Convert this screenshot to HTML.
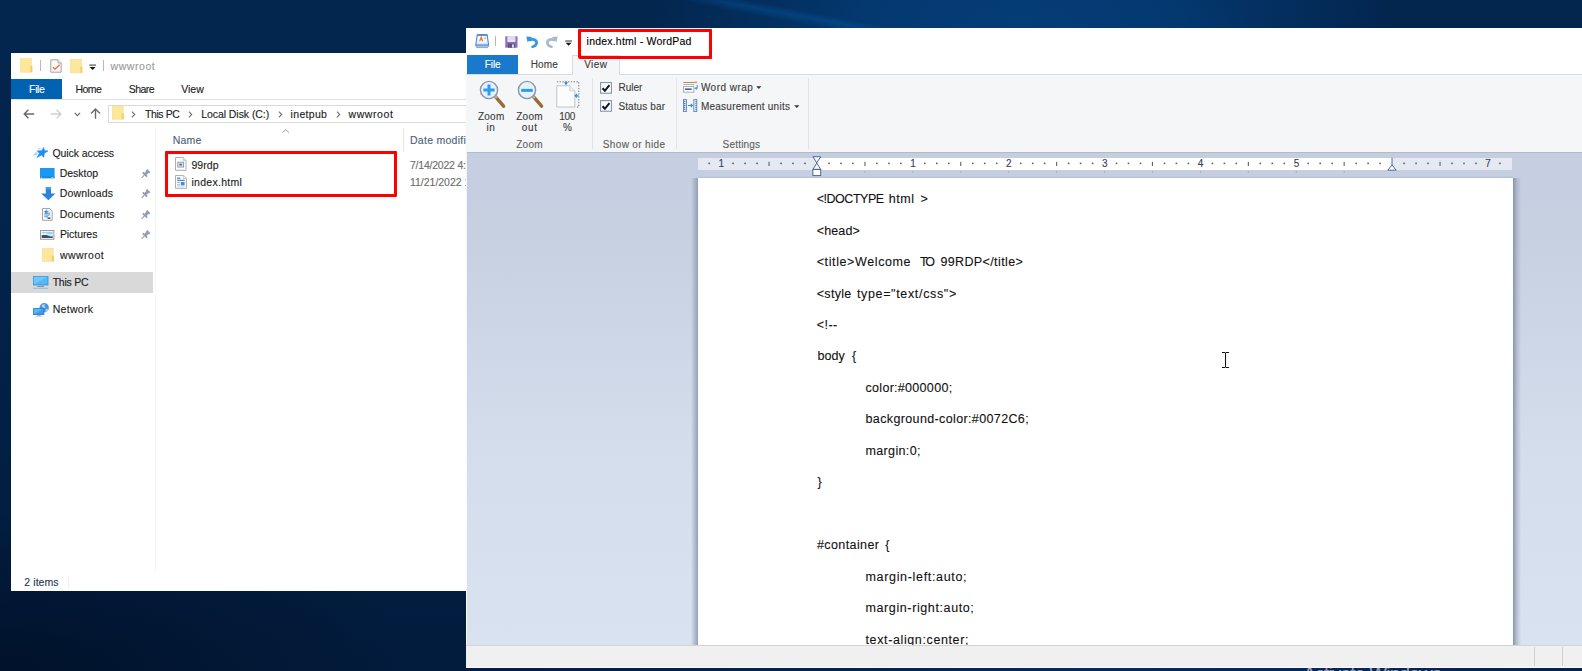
<!DOCTYPE html>
<html><head><meta charset="utf-8"><title>index.html - WordPad</title>
<style>
*{box-sizing:border-box;margin:0;padding:0}
html,body{width:1582px;height:671px;overflow:hidden}
body{position:relative;font-family:"Liberation Sans",sans-serif;font-size:11.5px;color:#1b1b1b;background:#02224a}
.a{position:absolute}
.ln{position:absolute;left:0;top:0;width:0;height:0}
.t{display:block;position:absolute;white-space:pre;-webkit-text-stroke:.12px currentColor}
svg{position:absolute;overflow:visible}
#desk{overflow:hidden;position:absolute;left:0;top:0;width:1582px;height:671px;
 background:
  radial-gradient(ellipse 370px 130px at 1020px 22px, rgba(4,62,121,.95), rgba(4,62,121,.8) 40%, rgba(4,62,121,.35) 72%, rgba(4,62,121,0) 100%),
  radial-gradient(ellipse 420px 160px at 0px 671px, rgba(0,10,28,.55), rgba(0,10,28,.25) 60%, rgba(0,10,28,0) 100%),
  linear-gradient(180deg,#03264f 0%,#02234a 40%,#021d40 85%,#021c3d 100%);}
#exw{position:absolute;left:0;top:0;width:466px;height:671px;overflow:hidden}
#exbg{position:absolute;left:11.3px;top:53px;width:460px;height:538.2px;background:#fff}
#wpw{position:absolute;left:0;top:0;width:1582px;height:671px;overflow:hidden}
#wpbg{position:absolute;left:466px;top:28px;width:1116px;height:639px;background:#fff}
.red{position:absolute;border:3px solid #fe0000;border-radius:1px}
.vsep{position:absolute;width:1px;background:#e2e3e5}

</style></head><body>
<div id="desk"><div class="a" style="left:640px;top:8px;width:300px;height:14px;transform:rotate(10.5deg);background:linear-gradient(180deg,rgba(8,86,160,0),rgba(8,86,160,.42) 45%,rgba(8,86,160,0));-webkit-mask-image:linear-gradient(90deg,transparent,#000 30%,#000 70%,transparent);mask-image:linear-gradient(90deg,transparent,#000 30%,#000 70%,transparent)"></div></div>
<div class="a" style="left:466px;top:667px;width:1116px;height:4px;background:linear-gradient(90deg,#021d43 0%,#03234f 35%,#05295c 55%,#04265a 80%,#03214b 100%)"></div>

<!-- ================= Explorer ================= -->
<div id="exw">
 <div id="exbg"></div>
 <!-- title bar icons -->
 <svg style="left:20px;top:58px" width="13" height="15" viewBox="0 0 13 15"><rect x=".4" y=".6" width="11.2" height="13.6" fill="#fde79c" stroke="#f9dd86" stroke-width=".6"/><rect x="10.2" y="8" width="2.3" height="6.2" fill="#f4d06c"/></svg>
 <div class="a" style="left:40px;top:60px;width:1px;height:11px;background:#b9b9b9"></div>
 <svg style="left:50px;top:59px" width="12" height="14" viewBox="0 0 12 14"><path d="M.8.8H8L11.2 4V13.2H.8Z" fill="#f9f9f9" stroke="#a3a3a3" stroke-width="1"/><path d="M8 .8V4H11.2" fill="#e6e6e6" stroke="#a3a3a3" stroke-width=".8"/><path d="M3 8.2L5 10.2L9.6 5.8" fill="none" stroke="#f26b2c" stroke-width="1.3"/></svg>
 <svg style="left:70px;top:59px" width="13" height="15" viewBox="0 0 13 15"><rect x=".4" y=".4" width="11.2" height="13.4" fill="#fde79c" stroke="#f9dd86" stroke-width=".6"/><rect x="10.2" y="7.6" width="2.3" height="6.2" fill="#f4d06c"/></svg>
 <svg style="left:89px;top:64px" width="8" height="7" viewBox="0 0 8 7"><rect x=".2" y=".5" width="6.8" height="1.2" fill="#555"/><path d="M.7 3H6.5L3.6 6Z" fill="#111"/></svg>
 <div class="a" style="left:103px;top:60px;width:1px;height:11px;background:#b9b9b9"></div>
 <!-- tabs -->
 <div class="a" style="left:11.3px;top:79px;width:50.7px;height:20px;background:#0063b1"></div>
 <div class="a" style="left:11px;top:99px;width:460px;height:1px;background:#dfe0e1"></div>
 <!-- nav arrows -->
 <svg style="left:23px;top:109px" width="12" height="10" viewBox="0 0 12 10"><path d="M11.2 5H1.2M5.4 .8L1.2 5L5.4 9.2" fill="none" stroke="#6a6a6a" stroke-width="1.4"/></svg>
 <svg style="left:50px;top:109px" width="12" height="10" viewBox="0 0 12 10"><path d="M.8 5H10.8M6.6 .8L10.8 5L6.6 9.2" fill="none" stroke="#cfcfcf" stroke-width="1.4"/></svg>
 <svg style="left:74px;top:112px" width="7" height="5" viewBox="0 0 7 5"><path d="M.7 .9L3.4 3.6L6.1 .9" fill="none" stroke="#6a6a6a" stroke-width="1.2"/></svg>
 <svg style="left:90px;top:108px" width="11" height="11" viewBox="0 0 11 11"><path d="M5.5 10.8V1.2M1 5.6L5.5 1.1L10 5.6" fill="none" stroke="#6a6a6a" stroke-width="1.4"/></svg>
 <!-- address box -->
 <div class="a" style="left:108px;top:105px;width:380px;height:18px;border:1px solid #d9d9d9;background:#fff"></div>
 <svg style="left:112px;top:106px" width="13" height="14" viewBox="0 0 13 14"><rect x=".4" y=".4" width="10.8" height="12.8" fill="#fde79c" stroke="#f9dd86" stroke-width=".6"/><rect x="9.6" y="7.4" width="2.3" height="5.8" fill="#f4d06c"/></svg>
 <svg style="left:131px;top:111px" width="5" height="7" viewBox="0 0 5 7"><path d="M.9 .7L3.7 3.5L.9 6.3" fill="none" stroke="#707070" stroke-width="1.1"/></svg>
 <svg style="left:188px;top:111px" width="5" height="7" viewBox="0 0 5 7"><path d="M.9 .7L3.7 3.5L.9 6.3" fill="none" stroke="#707070" stroke-width="1.1"/></svg>
 <svg style="left:277.5px;top:111px" width="5" height="7" viewBox="0 0 5 7"><path d="M.9 .7L3.7 3.5L.9 6.3" fill="none" stroke="#707070" stroke-width="1.1"/></svg>
 <svg style="left:335.5px;top:111px" width="5" height="7" viewBox="0 0 5 7"><path d="M.9 .7L3.7 3.5L.9 6.3" fill="none" stroke="#707070" stroke-width="1.1"/></svg>
 <!-- nav pane -->
 <div class="a" style="left:155px;top:128px;width:1px;height:444px;background:#f5f5f5"></div>
 <div class="a" style="left:11.3px;top:272px;width:141.7px;height:20.6px;background:#d9d9d9"></div>
 <!-- star -->
 <svg style="left:33px;top:147px" width="15" height="11" viewBox="0 0 15 11"><path d="M10.6 .5L11.6 3.7L14.9 4L11.3 6.3L10.8 10.2L8.3 7.9L4.1 10.4L6.5 6.3L4.3 3.9L8.8 3.7Z" fill="#1f8fee" stroke="#1f8fee" stroke-width=".7" stroke-linejoin="round"/><path d="M.4 8.2L4.4 7M1.8 6.4L4.6 5.8" stroke="#8cc6f7" stroke-width="1" fill="none"/><path d="M5 1.6L8.4 1.2" stroke="#a8d4f9" stroke-width=".9" fill="none"/></svg>
 <!-- desktop -->
 <svg style="left:40.4px;top:168.4px" width="15" height="11" viewBox="0 0 15 11"><rect x="0" y="0" width="14.6" height="10.2" fill="#1e96f3"/><rect x="0" y="8.6" width="14.6" height="1.6" fill="#1b82d6"/><rect x="11.2" y="8.9" width="2.6" height=".9" fill="#8ccaf9"/><rect x=".8" y="8.9" width="1.2" height=".9" fill="#8ccaf9"/></svg>
 <!-- downloads -->
 <svg style="left:40.6px;top:187.4px" width="15" height="14" viewBox="0 0 15 14"><path d="M4.8 0H10V6.4H14.4L7.4 13.2L.2 6.4H4.8Z" fill="#2b82da"/><rect x="4.8" y="0" width="5.2" height="2.4" fill="#4a9ce8"/></svg>
 <!-- documents -->
 <svg style="left:42.4px;top:207.6px" width="11" height="13" viewBox="0 0 11 13"><path d="M.5 .5H7.6L10.2 3.1V12.3H.5Z" fill="#fbfbfb" stroke="#9b9b9b" stroke-width=".9"/><path d="M2.4 3.4H6.4M2.4 5.2H8.2M2.4 7H8.2M2.4 8.8H6" stroke="#3d8fdc" stroke-width="1"/><path d="M5.6 9.4H8.4V11H5.6Z" fill="#555"/><path d="M4.6 1.6L3.2 4.8H5.6" fill="none" stroke="#2f7ed2" stroke-width=".9"/></svg>
 <!-- pictures -->
 <svg style="left:40.3px;top:229.7px" width="15" height="10" viewBox="0 0 15 10"><rect x=".5" y=".5" width="13.4" height="8.8" fill="#fff" stroke="#9c9c9c" stroke-width="1"/><rect x="1.7" y="1.7" width="11" height="6.4" fill="#9fd0f5"/><path d="M1.7 5.2C4 3.6 6 4.2 8 5.4C10 6.6 11.4 6.6 12.7 6.2V8.1H1.7Z" fill="#3c4f66"/><path d="M1.7 3.6C4 2.8 7 3.4 9 4.4L12.7 4V5.4C10 6 7 4.6 1.7 5.2Z" fill="#e9f3fb"/></svg>
 <!-- wwwroot folder -->
 <svg style="left:42px;top:248.2px" width="13" height="14" viewBox="0 0 13 14"><rect x=".3" y=".3" width="10.9" height="13.2" fill="#fde79c" stroke="#f9dd86" stroke-width=".6"/><rect x="9.8" y="7.6" width="2.3" height="5.9" fill="#f4d06c"/></svg>
 <!-- this pc -->
 <svg style="left:33px;top:276.4px" width="16" height="13" viewBox="0 0 16 13"><rect x=".4" y=".4" width="14.6" height="8.6" fill="#55b8f6" stroke="#2c8fe0" stroke-width=".8"/><path d="M.8 8.6V.8H14.6Z" fill="#7fcdfa" opacity=".7"/><rect x="4.4" y="9.9" width="6.6" height=".8" fill="#6b7684"/><rect x=".2" y="11.8" width="15" height=".8" fill="#7eaedd"/></svg>
 <!-- network -->
 <svg style="left:33px;top:303px" width="16" height="14" viewBox="0 0 16 14"><circle cx="11.2" cy="4.8" r="4.7" fill="#4a94dc"/><path d="M8.4 2.2C9.6 1.2 11 1 12 1.2C11 2.6 11.6 3.6 12.8 4.2C12 5.4 10.6 5.2 9.6 4.6Z" fill="#a9d3f5"/><path d="M12.6 6.2C13.6 5.8 14.6 6 15.2 6.4C14.6 7.8 13.8 8.6 12.6 9Z" fill="#a9d3f5"/><rect x=".4" y="5.6" width="10.4" height="6" fill="#3a9cf0" stroke="#2278c8" stroke-width=".8"/><path d="M.8 11.2V6H10.4Z" fill="#6fbdf8" opacity=".7"/><rect x="4.4" y="12.2" width="3.2" height=".8" fill="#9aa7b5"/><rect x="2.6" y="13.2" width="6.8" height=".7" fill="#b7c3cf"/></svg>
 <!-- pins -->
 <svg style="left:141px;top:169.0px" width="10" height="10" viewBox="0 0 10 10"><g transform="translate(3.3 6.1) rotate(45)" fill="#8f9cae"><rect x="-2.2" y="-6.4" width="4.4" height="2"/><rect x="-1.5" y="-4.5" width="3" height="2.9"/><rect x="-3" y="-1.8" width="6" height="1.8"/><rect x="-.5" y="0" width="1" height="3.8"/></g></svg>
 <svg style="left:141px;top:189.4px" width="10" height="10" viewBox="0 0 10 10"><g transform="translate(3.3 6.1) rotate(45)" fill="#8f9cae"><rect x="-2.2" y="-6.4" width="4.4" height="2"/><rect x="-1.5" y="-4.5" width="3" height="2.9"/><rect x="-3" y="-1.8" width="6" height="1.8"/><rect x="-.5" y="0" width="1" height="3.8"/></g></svg>
 <svg style="left:141px;top:209.8px" width="10" height="10" viewBox="0 0 10 10"><g transform="translate(3.3 6.1) rotate(45)" fill="#8f9cae"><rect x="-2.2" y="-6.4" width="4.4" height="2"/><rect x="-1.5" y="-4.5" width="3" height="2.9"/><rect x="-3" y="-1.8" width="6" height="1.8"/><rect x="-.5" y="0" width="1" height="3.8"/></g></svg>
 <svg style="left:141px;top:230.2px" width="10" height="10" viewBox="0 0 10 10"><g transform="translate(3.3 6.1) rotate(45)" fill="#8f9cae"><rect x="-2.2" y="-6.4" width="4.4" height="2"/><rect x="-1.5" y="-4.5" width="3" height="2.9"/><rect x="-3" y="-1.8" width="6" height="1.8"/><rect x="-.5" y="0" width="1" height="3.8"/></g></svg>
 <!-- columns -->
 <svg style="left:281.8px;top:129.4px" width="8" height="4" viewBox="0 0 8 4"><path d="M.4 3.7L3.7 .5L7 3.7" fill="none" stroke="#8a8a8a" stroke-width=".9"/></svg>
 <div class="a" style="left:403px;top:129px;width:1px;height:22px;background:#e5e5e5"></div>
 <!-- file icons -->
 <svg style="left:174.8px;top:157.2px" width="12" height="14" viewBox="0 0 12 14"><path d="M.5 .5H8.2L11 3.3V13.4H.5Z" fill="#fbfbfb" stroke="#a9a9a9" stroke-width=".9"/><path d="M8.2 .5V3.3H11" fill="#eee" stroke="#b5b5b5" stroke-width=".7"/><rect x="2.8" y="5.2" width="5.8" height="4.8" fill="#eef3f8" stroke="#8d9299" stroke-width=".9"/><rect x="4.2" y="6.6" width="3" height="2" fill="#3d7fc4"/></svg>
 <svg style="left:174.8px;top:175px" width="12" height="14" viewBox="0 0 12 14"><path d="M.5 .5H8.6L11.5 3.4V13.4H.5Z" fill="#fbfbfb" stroke="#a9a9a9" stroke-width=".9"/><path d="M8.6 .5V3.4H11.5" fill="#eee" stroke="#b5b5b5" stroke-width=".7"/><path d="M2.2 3.2H5.2" stroke="#5b63c9" stroke-width="1.2"/><path d="M2.2 5.4H9.6" stroke="#3f8fdd" stroke-width="1.3"/><path d="M2.2 7.6H4.8M2.2 9.8H4.8" stroke="#9aa4b0" stroke-width="1"/><rect x="5.8" y="7" width="3.8" height="3.4" fill="#3f8fdd"/><path d="M2.2 11.8H9.6" stroke="#c4c9cf" stroke-width=".8"/></svg>
 <div class="red" style="left:165px;top:151px;width:232.3px;height:46px"></div>
 <div class="a" style="left:68px;top:576px;width:1px;height:12px;background:#f0f0f0"></div>
<div class="ln"><span class="t" style="left:110.6px;top:59.00px;font-size:10.5px;line-height:14px;color:#9a9a9a;letter-spacing:0.54px;">wwwroot</span></div>
<div class="ln"><span class="t" style="left:29.1px;top:82.00px;font-size:10.5px;line-height:14px;color:#ffffff;letter-spacing:-0.37px;">File</span></div>
<div class="ln"><span class="t" style="left:75.5px;top:82.00px;font-size:10.5px;line-height:14px;color:#1b1b1b;letter-spacing:-0.54px;">Home</span></div>
<div class="ln"><span class="t" style="left:128.7px;top:82.00px;font-size:10.5px;line-height:14px;color:#1b1b1b;letter-spacing:-0.56px;">Share</span></div>
<div class="ln"><span class="t" style="left:181.2px;top:82.00px;font-size:10.5px;line-height:14px;color:#1b1b1b;letter-spacing:0.01px;">View</span></div>
<div class="ln"><span class="t" style="left:145.0px;top:107.00px;font-size:10.5px;line-height:14px;color:#1b1b1b;letter-spacing:-0.42px;">This PC</span></div>
<div class="ln"><span class="t" style="left:201.2px;top:107.00px;font-size:10.5px;line-height:14px;color:#1b1b1b;letter-spacing:-0.06px;">Local Disk (C:)</span></div>
<div class="ln"><span class="t" style="left:290.6px;top:107.00px;font-size:10.5px;line-height:14px;color:#1b1b1b;letter-spacing:0.32px;">inetpub</span></div>
<div class="ln"><span class="t" style="left:348.5px;top:107.00px;font-size:10.5px;line-height:14px;color:#1b1b1b;letter-spacing:0.59px;">wwwroot</span></div>
<div class="ln"><span class="t" style="left:52.4px;top:146.00px;font-size:10.5px;line-height:14px;color:#1b1b1b;letter-spacing:-0.07px;">Quick access</span></div>
<div class="ln"><span class="t" style="left:59.7px;top:166.00px;font-size:10.5px;line-height:14px;color:#1b1b1b;letter-spacing:-0.01px;">Desktop</span></div>
<div class="ln"><span class="t" style="left:59.7px;top:186.00px;font-size:10.5px;line-height:14px;color:#1b1b1b;letter-spacing:0.17px;">Downloads</span></div>
<div class="ln"><span class="t" style="left:59.7px;top:207.00px;font-size:10.5px;line-height:14px;color:#1b1b1b;letter-spacing:0.22px;">Documents</span></div>
<div class="ln"><span class="t" style="left:59.9px;top:227.00px;font-size:10.5px;line-height:14px;color:#1b1b1b;letter-spacing:-0.06px;">Pictures</span></div>
<div class="ln"><span class="t" style="left:59.9px;top:248.00px;font-size:10.5px;line-height:14px;color:#1b1b1b;letter-spacing:0.49px;">wwwroot</span></div>
<div class="ln"><span class="t" style="left:52.7px;top:275.00px;font-size:10.5px;line-height:14px;color:#1b1b1b;letter-spacing:-0.26px;">This PC</span></div>
<div class="ln"><span class="t" style="left:52.7px;top:302.00px;font-size:10.5px;line-height:14px;color:#1b1b1b;letter-spacing:0.30px;">Network</span></div>
<div class="ln"><span class="t" style="left:172.7px;top:133.00px;font-size:10.5px;line-height:14px;color:#4c607a;letter-spacing:0.19px;">Name</span></div>
<div class="ln"><span class="t" style="left:410.0px;top:133.00px;font-size:10.5px;line-height:14px;color:#4c607a;letter-spacing:0.27px;">Date modified</span></div>
<div class="ln"><span class="t" style="left:191.4px;top:158.00px;font-size:10.5px;line-height:14px;color:#1b1b1b;letter-spacing:0.06px;">99rdp</span></div>
<div class="ln"><span class="t" style="left:191.4px;top:175.00px;font-size:10.5px;line-height:14px;color:#1b1b1b;letter-spacing:0.30px;">index.html</span></div>
<div class="ln"><span class="t" style="left:410.0px;top:158.00px;font-size:10.5px;line-height:14px;color:#6d6d6d;letter-spacing:-0.22px;">7/14/2022 4:</span></div>
<div class="ln"><span class="t" style="left:410.0px;top:175.00px;font-size:10.5px;line-height:14px;color:#6d6d6d;letter-spacing:-0.02px;">11/21/2022 1</span></div>
<div class="ln"><span class="t" style="left:24.3px;top:575.00px;font-size:10.5px;line-height:14px;color:#1e395b;letter-spacing:0.08px;">2 items</span></div>
</div>

<!-- ================= WordPad ================= -->
<div id="wpw">
 <div id="wpbg"></div>
 <!-- title icons -->
 <svg style="left:474.5px;top:33.6px" width="15" height="15" viewBox="0 0 15 15"><path d="M2.2 .6H12.2L13.6 11H.8Z" fill="#dceafa" stroke="#4d7fc0" stroke-width="1"/><path d="M3.2 1.8H11.2L12 8.6H2.6Z" fill="#f4f9ff"/><rect x="2.4" y=".4" width="9.6" height="1.6" fill="#5b8fd0"/><path d="M4.6 7.2L6.2 3L7.8 7.2M5.2 5.8H7.2" fill="none" stroke="#f07c28" stroke-width="1.1"/><path d="M9 4.2H11" stroke="#6c9bd8" stroke-width=".9"/><path d="M.4 11.4H14L12.6 13.6H1.8Z" fill="#a9c6ea" stroke="#5b8fd0" stroke-width=".7"/></svg>
 <div class="a" style="left:495px;top:36px;width:1px;height:10px;background:#b5b5b5"></div>
 <svg style="left:505.2px;top:36px" width="13" height="12" viewBox="0 0 13 12"><rect x=".3" y=".3" width="12.2" height="11.4" fill="#8d6cc2"/><rect x="2.4" y=".3" width="8" height="5.6" fill="#f1edf8"/><path d="M2.4 2H10.4M2.4 3.8H10.4" stroke="#c9bfe0" stroke-width=".7"/><rect x="3" y="7.6" width="7" height="4.1" fill="#5d5670"/><rect x="7" y="8.4" width="2" height="3.3" fill="#d7d3e0"/></svg>
 <svg style="left:525.6px;top:36px" width="13" height="12" viewBox="0 0 13 12"><path d="M3.6 3.9C7.4 2.6 10.8 4 10.6 7C10.4 9.2 8.6 10.3 6.6 10.7" fill="none" stroke="#2e97e6" stroke-width="2.7" stroke-linecap="round"/><path d="M.3 .5L6.2 .9L1.6 6.3Z" fill="#2e97e6"/></svg>
 <svg style="left:544.8px;top:36px" width="13" height="12" viewBox="0 0 13 12"><path d="M9.4 3.9C5.6 2.6 2.2 4 2.4 7C2.6 9.2 4.4 10.3 6.4 10.7" fill="none" stroke="#a9b8cb" stroke-width="2.7" stroke-linecap="round"/><path d="M12.7 .5L6.8 .9L11.4 6.3Z" fill="#a9b8cb"/></svg>
 <svg style="left:565px;top:39.6px" width="8" height="7" viewBox="0 0 8 7"><rect x=".2" y=".4" width="6.8" height="1.2" fill="#555"/><path d="M.7 2.8H6.5L3.6 5.8Z" fill="#111"/></svg>
 <div class="red" style="left:578px;top:29px;width:134px;height:30px"></div>
 <!-- tabs & ribbon -->
 <div class="a" style="left:466px;top:74px;width:1116px;height:78px;background:#f5f6f7;border-top:1px solid #dadbdc"></div>
 <div class="a" style="left:467px;top:55px;width:51px;height:19px;background:#1979ca"></div>
 <div class="a" style="left:572px;top:54.5px;width:48px;height:20.5px;background:#f5f6f7;border:1px solid #dadbdc;border-bottom:none"></div>
 <div class="a" style="left:578px;top:29px;width:134px;height:30px;border:3px solid #fe0000;border-radius:2px;clip-path:inset(22px 0 0 0)"></div>
 <!-- zoom in -->
 <svg style="left:478.6px;top:79.6px" width="27" height="28" viewBox="0 0 27 28"><path d="M16.4 16.6L24.6 26.2" stroke="#9a6a3c" stroke-width="3.4" stroke-linecap="round"/><path d="M15 15L17.6 18" stroke="#b9bec4" stroke-width="2.2"/><circle cx="10" cy="10" r="8.6" fill="#e4f2fd" stroke="#8c97a3" stroke-width="1.4"/><path d="M10 4.4V15.6M4.4 10H15.6" stroke="#2d9bee" stroke-width="3"/></svg>
 <svg style="left:516.9px;top:79.6px" width="27" height="28" viewBox="0 0 27 28"><path d="M16.4 16.6L24.6 26.2" stroke="#9a6a3c" stroke-width="3.4" stroke-linecap="round"/><path d="M15 15L17.6 18" stroke="#b9bec4" stroke-width="2.2"/><circle cx="10" cy="10" r="8.6" fill="#e4f2fd" stroke="#8c97a3" stroke-width="1.4"/><path d="M4.2 10.4H15.8" stroke="#2d9bee" stroke-width="3"/></svg>
 <!-- 100% -->
 <svg style="left:555.8px;top:80.6px" width="24" height="27" viewBox="0 0 24 27"><path d="M.8 4.8H13.8L18.8 9.8V26H.8Z" fill="#fcfcfc" stroke="#c4c4c4" stroke-width="1"/><path d="M13.8 4.8V9.8H18.8" fill="#efefef" stroke="#c9c9c9" stroke-width=".8"/><path d="M.8 .8H22.8V26H19.4" fill="none" stroke="#6d6d6d" stroke-width=".9" stroke-dasharray="1.4 1.4"/><path d="M8 1.2H12L10 4.4Z" fill="#2d8fe0"/><path d="M10 .2V2" stroke="#2d8fe0" stroke-width="1.2"/><path d="M22.6 14.8H19.4M21 13L19.2 14.8L21 16.6" fill="none" stroke="#2d8fe0" stroke-width="1.2"/></svg>
 <div class="vsep" style="left:592px;top:78px;height:71px"></div>
 <!-- checkboxes -->
 <svg style="left:599.8px;top:81.6px" width="12" height="12" viewBox="0 0 12 12"><rect x=".6" y=".6" width="10.8" height="10.6" fill="#fff" stroke="#7f93b8" stroke-width="1.1"/><path d="M2.5 6.2L4.9 8.8L9.4 3.2" fill="none" stroke="#151515" stroke-width="2"/></svg>
 <svg style="left:599.8px;top:100.3px" width="12" height="12" viewBox="0 0 12 12"><rect x=".6" y=".6" width="10.8" height="10.6" fill="#fff" stroke="#7f93b8" stroke-width="1.1"/><path d="M2.5 6.2L4.9 8.8L9.4 3.2" fill="none" stroke="#151515" stroke-width="2"/></svg>
 <div class="vsep" style="left:676px;top:78px;height:71px"></div>
 <!-- word wrap -->
 <svg style="left:683px;top:81px" width="16" height="12" viewBox="0 0 16 12"><rect x=".4" y="1" width="10.6" height="1" fill="#b98850"/><rect x="10.6" y=".6" width="3.6" height="1.6" fill="#d9a066"/><rect x=".4" y="3" width="10.8" height=".9" fill="#a9aeb6"/><rect x=".5" y="5.6" width="10.4" height="5.6" fill="#fdfdfd" stroke="#a3a7ad" stroke-width=".9"/><rect x="2" y="7.4" width="6.6" height="1.6" fill="#3b5f9e"/><path d="M14.2 4V7.4H12.4M13.4 6.2L12.2 7.4L13.4 8.6" fill="none" stroke="#2d8fe0" stroke-width="1"/></svg>
 <svg style="left:756.4px;top:85.8px" width="6" height="4" viewBox="0 0 6 4"><path d="M.2 .2H5.4L2.8 3Z" fill="#333"/></svg>
 <!-- measurement -->
 <svg style="left:683px;top:99.4px" width="15" height="13" viewBox="0 0 15 13"><rect x=".4" y=".4" width="3" height="12.2" fill="#dfe9f7" stroke="#4d7fc0" stroke-width=".8"/><path d="M.8 2.4H2.4M.8 4.4H2.4M.8 6.4H2.4M.8 8.4H2.4M.8 10.4H2.4" stroke="#2d4f86" stroke-width=".8"/><rect x="10.8" y=".4" width="3" height="12.2" fill="#dfe9f7" stroke="#4d7fc0" stroke-width=".8"/><path d="M12.4 2.4H13.4M12.4 4.4H13.4M12.4 6.4H13.4M12.4 8.4H13.4M12.4 10.4H13.4" stroke="#2d4f86" stroke-width=".8"/><path d="M5 6.5H9.4M7.8 5L9.4 6.5L7.8 8" fill="none" stroke="#2d8fe0" stroke-width="1.1"/></svg>
 <svg style="left:793.8px;top:104.6px" width="6" height="4" viewBox="0 0 6 4"><path d="M.2 .2H5.4L2.8 3Z" fill="#333"/></svg>
 <div class="vsep" style="left:808px;top:78px;height:71px"></div>

 <!-- document area -->
 <div class="a" style="left:466px;top:152px;width:1116px;height:493px;background:linear-gradient(180deg,#c4cee0 0%,#c7d1e2 20%,#d3ddec 60%,#d8e2f0 100%)"></div>
 <div class="a" style="left:466px;top:152px;width:1116px;height:1px;background:#b3bbc9"></div>
 <div class="a" style="left:698px;top:158px;width:814px;height:12px;background:#e5e9f2"></div>
 <div class="a" style="left:817px;top:158px;width:575px;height:12px;background:#fff"></div>
 <svg id="rticks" style="left:698px;top:158px" width="814" height="16" viewBox="0 0 814 16"><rect x="10.4" y="4.6" width="1.6" height="1.6" fill="#56617b"/><rect x="34.3" y="4.6" width="1.6" height="1.6" fill="#56617b"/><rect x="46.3" y="4.6" width="1.6" height="1.6" fill="#56617b"/><rect x="58.3" y="4.6" width="1.6" height="1.6" fill="#56617b"/><rect x="70.5" y="3.8" width="1.1" height="4.2" fill="#56617b"/><rect x="82.3" y="4.6" width="1.6" height="1.6" fill="#56617b"/><rect x="94.2" y="4.6" width="1.6" height="1.6" fill="#56617b"/><rect x="106.2" y="4.6" width="1.6" height="1.6" fill="#56617b"/><rect x="130.2" y="4.6" width="1.6" height="1.6" fill="#56617b"/><rect x="142.2" y="4.6" width="1.6" height="1.6" fill="#56617b"/><rect x="154.1" y="4.6" width="1.6" height="1.6" fill="#56617b"/><rect x="166.4" y="3.8" width="1.1" height="4.2" fill="#56617b"/><rect x="166.4" y="13" width="1" height="2" fill="#a9b2c5"/><rect x="178.1" y="4.6" width="1.6" height="1.6" fill="#56617b"/><rect x="190.1" y="4.6" width="1.6" height="1.6" fill="#56617b"/><rect x="202.1" y="4.6" width="1.6" height="1.6" fill="#56617b"/><rect x="226.0" y="4.6" width="1.6" height="1.6" fill="#56617b"/><rect x="238.0" y="4.6" width="1.6" height="1.6" fill="#56617b"/><rect x="250.0" y="4.6" width="1.6" height="1.6" fill="#56617b"/><rect x="262.2" y="3.8" width="1.1" height="4.2" fill="#56617b"/><rect x="262.3" y="13" width="1" height="2" fill="#a9b2c5"/><rect x="274.0" y="4.6" width="1.6" height="1.6" fill="#56617b"/><rect x="285.9" y="4.6" width="1.6" height="1.6" fill="#56617b"/><rect x="297.9" y="4.6" width="1.6" height="1.6" fill="#56617b"/><rect x="321.9" y="4.6" width="1.6" height="1.6" fill="#56617b"/><rect x="333.9" y="4.6" width="1.6" height="1.6" fill="#56617b"/><rect x="345.8" y="4.6" width="1.6" height="1.6" fill="#56617b"/><rect x="358.1" y="3.8" width="1.1" height="4.2" fill="#56617b"/><rect x="358.1" y="13" width="1" height="2" fill="#a9b2c5"/><rect x="369.8" y="4.6" width="1.6" height="1.6" fill="#56617b"/><rect x="381.8" y="4.6" width="1.6" height="1.6" fill="#56617b"/><rect x="393.8" y="4.6" width="1.6" height="1.6" fill="#56617b"/><rect x="417.7" y="4.6" width="1.6" height="1.6" fill="#56617b"/><rect x="429.7" y="4.6" width="1.6" height="1.6" fill="#56617b"/><rect x="441.7" y="4.6" width="1.6" height="1.6" fill="#56617b"/><rect x="453.9" y="3.8" width="1.1" height="4.2" fill="#56617b"/><rect x="454.0" y="13" width="1" height="2" fill="#a9b2c5"/><rect x="465.7" y="4.6" width="1.6" height="1.6" fill="#56617b"/><rect x="477.6" y="4.6" width="1.6" height="1.6" fill="#56617b"/><rect x="489.6" y="4.6" width="1.6" height="1.6" fill="#56617b"/><rect x="513.6" y="4.6" width="1.6" height="1.6" fill="#56617b"/><rect x="525.6" y="4.6" width="1.6" height="1.6" fill="#56617b"/><rect x="537.5" y="4.6" width="1.6" height="1.6" fill="#56617b"/><rect x="549.8" y="3.8" width="1.1" height="4.2" fill="#56617b"/><rect x="549.8" y="13" width="1" height="2" fill="#a9b2c5"/><rect x="561.5" y="4.6" width="1.6" height="1.6" fill="#56617b"/><rect x="573.5" y="4.6" width="1.6" height="1.6" fill="#56617b"/><rect x="585.5" y="4.6" width="1.6" height="1.6" fill="#56617b"/><rect x="609.4" y="4.6" width="1.6" height="1.6" fill="#56617b"/><rect x="621.4" y="4.6" width="1.6" height="1.6" fill="#56617b"/><rect x="633.4" y="4.6" width="1.6" height="1.6" fill="#56617b"/><rect x="645.6" y="3.8" width="1.1" height="4.2" fill="#56617b"/><rect x="645.7" y="13" width="1" height="2" fill="#a9b2c5"/><rect x="657.4" y="4.6" width="1.6" height="1.6" fill="#56617b"/><rect x="669.3" y="4.6" width="1.6" height="1.6" fill="#56617b"/><rect x="681.3" y="4.6" width="1.6" height="1.6" fill="#56617b"/><rect x="705.3" y="4.6" width="1.6" height="1.6" fill="#56617b"/><rect x="717.3" y="4.6" width="1.6" height="1.6" fill="#56617b"/><rect x="729.2" y="4.6" width="1.6" height="1.6" fill="#56617b"/><rect x="741.5" y="3.8" width="1.1" height="4.2" fill="#56617b"/><rect x="753.2" y="4.6" width="1.6" height="1.6" fill="#56617b"/><rect x="765.2" y="4.6" width="1.6" height="1.6" fill="#56617b"/><rect x="777.2" y="4.6" width="1.6" height="1.6" fill="#56617b"/><rect x="801.1" y="4.6" width="1.6" height="1.6" fill="#56617b"/><rect x="214.3" y="13" width="1" height="2" fill="#a9b2c5"/><rect x="310.2" y="13" width="1" height="2" fill="#a9b2c5"/><rect x="406.0" y="13" width="1" height="2" fill="#a9b2c5"/><rect x="501.9" y="13" width="1" height="2" fill="#a9b2c5"/><rect x="597.8" y="13" width="1" height="2" fill="#a9b2c5"/></svg>
 <div class="a" style="left:690.5px;top:178px;width:8px;height:467px;background:linear-gradient(90deg,rgba(150,162,186,0),rgba(150,162,186,.55) 45%,#8b98ae)"></div>
 <div class="a" style="left:698px;top:178px;width:815px;height:467px;background:#fff"></div>
 <div class="a" style="left:1513px;top:178px;width:8px;height:467px;background:linear-gradient(90deg,#8693a9,rgba(150,162,186,.6) 40%,rgba(150,162,186,0))"></div>
 <div class="a" style="left:698px;top:176px;width:815px;height:2px;background:linear-gradient(180deg,rgba(160,172,196,0),#b3bdd1)"></div>
 <!-- ruler markers -->
 <svg style="left:812.2px;top:156px" width="10" height="21" viewBox="0 0 10 21"><path d="M.9 .7H8.7L4.8 6.9Z" fill="#f4f6fa" stroke="#425c8a" stroke-width=".9"/><path d="M4.8 7.1L8.7 13.4H.9Z" fill="#f4f6fa" stroke="#425c8a" stroke-width=".9"/><rect x=".9" y="13.4" width="7.8" height="6.2" fill="#fff" stroke="#425c8a" stroke-width=".9"/></svg>
 <svg style="left:1387.4px;top:157px" width="10" height="14" viewBox="0 0 10 14"><path d="M5 .6V8" stroke="#425c8a" stroke-width=".9"/><path d="M5 8L9.2 13.2H.8Z" fill="#fff" stroke="#425c8a" stroke-width=".9"/></svg>
 <!-- I-beam -->
 <svg style="left:1222px;top:352px" width="7" height="16" viewBox="0 0 7 16"><path d="M0 0H3V1H0ZM4 0H7V1H4ZM3 .6H4V15.4H3ZM0 15H3V16H0ZM4 15H7V16H4Z" fill="#111"/></svg>
 <div class="a" style="left:466px;top:152px;width:1px;height:515px;background:rgba(255,255,255,.8)"></div>
<div class="ln"><span class="t" style="left:586.6px;top:34.00px;font-size:10.5px;line-height:14px;color:#000;letter-spacing:0.21px;">index.html - WordPad</span></div>
<div class="ln"><span class="t" style="left:484.8px;top:58.00px;font-size:10px;line-height:13px;color:#fff;letter-spacing:-0.08px;">File</span></div>
<div class="ln"><span class="t" style="left:530.8px;top:58.00px;font-size:10px;line-height:13px;color:#3c3c3c;letter-spacing:0.10px;">Home</span></div>
<div class="ln"><span class="t" style="left:584.2px;top:58.00px;font-size:10px;line-height:13px;color:#3c3c3c;letter-spacing:0.43px;">View</span></div>
<div class="ln"><span class="t" style="left:477.9px;top:110.00px;font-size:10px;line-height:13px;color:#3c3c3c;letter-spacing:0.28px;">Zoom</span> <span class="t" style="left:486.5px;top:121.00px;font-size:10px;line-height:13px;color:#3c3c3c;letter-spacing:0.60px;">in</span></div>
<div class="ln"><span class="t" style="left:516.2px;top:110.00px;font-size:10px;line-height:13px;color:#3c3c3c;letter-spacing:0.28px;">Zoom</span> <span class="t" style="left:521.7px;top:121.00px;font-size:10px;line-height:13px;color:#3c3c3c;letter-spacing:0.70px;">out</span></div>
<div class="ln"><span class="t" style="left:559.3px;top:110.00px;font-size:10px;line-height:13px;color:#3c3c3c;letter-spacing:-0.34px;">100</span> <span class="t" style="left:563.0px;top:121.00px;font-size:10px;line-height:13px;color:#3c3c3c;letter-spacing:0.00px;">%</span></div>
<div class="ln"><span class="t" style="left:516.2px;top:138.00px;font-size:10px;line-height:13px;color:#5f5f5f;letter-spacing:0.28px;">Zoom</span></div>
<div class="ln"><span class="t" style="left:618.4px;top:81.00px;font-size:10px;line-height:13px;color:#3c3c3c;letter-spacing:0.02px;">Ruler</span></div>
<div class="ln"><span class="t" style="left:618.4px;top:100.00px;font-size:10px;line-height:13px;color:#3c3c3c;letter-spacing:0.11px;">Status bar</span></div>
<div class="ln"><span class="t" style="left:602.8px;top:138.00px;font-size:10px;line-height:13px;color:#5f5f5f;letter-spacing:0.35px;">Show or hide</span></div>
<div class="ln"><span class="t" style="left:700.9px;top:81.00px;font-size:10px;line-height:13px;color:#3c3c3c;letter-spacing:0.47px;">Word wrap</span></div>
<div class="ln"><span class="t" style="left:700.9px;top:100.00px;font-size:10px;line-height:13px;color:#3c3c3c;letter-spacing:0.25px;">Measurement units</span></div>
<div class="ln"><span class="t" style="left:722.6px;top:138.00px;font-size:10px;line-height:13px;color:#5f5f5f;letter-spacing:0.19px;">Settings</span></div>
<div class="ln"><span class="t" style="left:816.7px;top:191.00px;font-size:12.5px;line-height:16px;color:#101010;letter-spacing:-0.46px;-webkit-text-stroke:.1px #101010;">&lt;!DOCTYPE</span> <span class="t" style="left:888.8px;top:191.00px;font-size:12.5px;line-height:16px;color:#101010;letter-spacing:0.56px;-webkit-text-stroke:.1px #101010;">html</span> <span class="t" style="left:920.6px;top:191.00px;font-size:12.5px;line-height:16px;color:#101010;letter-spacing:0.00px;-webkit-text-stroke:.1px #101010;">&gt;</span></div>
<div class="ln"><span class="t" style="left:816.7px;top:223.00px;font-size:12.5px;line-height:16px;color:#101010;letter-spacing:0.16px;-webkit-text-stroke:.1px #101010;">&lt;head&gt;</span></div>
<div class="ln"><span class="t" style="left:816.7px;top:254.00px;font-size:12.5px;line-height:16px;color:#101010;letter-spacing:0.61px;-webkit-text-stroke:.1px #101010;">&lt;title&gt;Welcome</span>&nbsp; <span class="t" style="left:919.9px;top:254.00px;font-size:12.5px;line-height:16px;color:#101010;letter-spacing:-2.04px;-webkit-text-stroke:.1px #101010;">TO</span> <span class="t" style="left:940.4px;top:254.00px;font-size:12.5px;line-height:16px;color:#101010;letter-spacing:0.38px;-webkit-text-stroke:.1px #101010;">99RDP&lt;/title&gt;</span></div>
<div class="ln"><span class="t" style="left:816.7px;top:286.00px;font-size:12.5px;line-height:16px;color:#101010;letter-spacing:0.32px;-webkit-text-stroke:.1px #101010;">&lt;style</span> <span class="t" style="left:856.9px;top:286.00px;font-size:12.5px;line-height:16px;color:#101010;letter-spacing:0.66px;-webkit-text-stroke:.1px #101010;">type=&quot;text/css&quot;&gt;</span></div>
<div class="ln"><span class="t" style="left:816.7px;top:317.00px;font-size:12.5px;line-height:16px;color:#101010;letter-spacing:0.46px;-webkit-text-stroke:.1px #101010;">&lt;!--</span></div>
<div class="ln"><span class="t" style="left:817.4px;top:348.00px;font-size:12.5px;line-height:16px;color:#101010;letter-spacing:0.10px;-webkit-text-stroke:.1px #101010;">body</span> <span class="t" style="left:852.0px;top:348.00px;font-size:12.5px;line-height:16px;color:#101010;letter-spacing:0.00px;-webkit-text-stroke:.1px #101010;">{</span></div>
<div class="ln"><span class="t" style="left:865.5px;top:380.00px;font-size:12.5px;line-height:16px;color:#101010;letter-spacing:0.30px;-webkit-text-stroke:.1px #101010;">color:#000000;</span></div>
<div class="ln"><span class="t" style="left:865.5px;top:411.00px;font-size:12.5px;line-height:16px;color:#101010;letter-spacing:0.37px;-webkit-text-stroke:.1px #101010;">background-color:#0072C6;</span></div>
<div class="ln"><span class="t" style="left:865.5px;top:443.00px;font-size:12.5px;line-height:16px;color:#101010;letter-spacing:0.36px;-webkit-text-stroke:.1px #101010;">margin:0;</span></div>
<div class="ln"><span class="t" style="left:817.4px;top:474.00px;font-size:12.5px;line-height:16px;color:#101010;letter-spacing:0.00px;-webkit-text-stroke:.1px #101010;">}</span></div>
<div class="ln"><span class="t" style="left:817.0px;top:537.00px;font-size:12.5px;line-height:16px;color:#101010;letter-spacing:0.40px;-webkit-text-stroke:.1px #101010;">#container</span> <span class="t" style="left:885.3px;top:537.00px;font-size:12.5px;line-height:16px;color:#101010;letter-spacing:0.00px;-webkit-text-stroke:.1px #101010;">{</span></div>
<div class="ln"><span class="t" style="left:865.5px;top:569.00px;font-size:12.5px;line-height:16px;color:#101010;letter-spacing:0.67px;-webkit-text-stroke:.1px #101010;">margin-left:auto;</span></div>
<div class="ln"><span class="t" style="left:865.5px;top:600.00px;font-size:12.5px;line-height:16px;color:#101010;letter-spacing:0.61px;-webkit-text-stroke:.1px #101010;">margin-right:auto;</span></div>
<div class="ln"><span class="t" style="left:865.5px;top:632.00px;font-size:12.5px;line-height:16px;color:#101010;letter-spacing:0.62px;-webkit-text-stroke:.1px #101010;">text-align:center;</span></div>
<div class="ln"><span class="t" style="left:718.5px;top:157.00px;font-size:10px;line-height:13px;color:#36415c;letter-spacing:0.00px;">1</span></div>
<div class="ln"><span class="t" style="left:910.2px;top:157.00px;font-size:10px;line-height:13px;color:#36415c;letter-spacing:0.00px;">1</span></div>
<div class="ln"><span class="t" style="left:1006.1px;top:157.00px;font-size:10px;line-height:13px;color:#36415c;letter-spacing:0.00px;">2</span></div>
<div class="ln"><span class="t" style="left:1102.0px;top:157.00px;font-size:10px;line-height:13px;color:#36415c;letter-spacing:0.00px;">3</span></div>
<div class="ln"><span class="t" style="left:1197.8px;top:157.00px;font-size:10px;line-height:13px;color:#36415c;letter-spacing:0.00px;">4</span></div>
<div class="ln"><span class="t" style="left:1293.7px;top:157.00px;font-size:10px;line-height:13px;color:#36415c;letter-spacing:0.00px;">5</span></div>
<div class="ln"><span class="t" style="left:1485.3px;top:157.00px;font-size:10px;line-height:13px;color:#36415c;letter-spacing:0.00px;">7</span></div>
 <!-- status bar -->
 <div class="a" style="left:466px;top:645px;width:1116px;height:22.5px;background:#f0f0f0;border-top:1px solid #d4d4d4;border-bottom:1px solid #fbfbfb"></div>
 <div class="a" style="left:1534px;top:647px;width:1px;height:19px;background:#d0d0d0"></div>
 <div class="a" style="left:1562px;top:647px;width:1px;height:19px;background:#d0d0d0"></div>
<div class="ln"><span class="t" style="left:1303.3px;top:661.00px;font-size:19px;line-height:25px;color:rgba(235,238,245,.62);letter-spacing:-0.78px;">Activate Windows</span></div>

</div>

</body></html>
